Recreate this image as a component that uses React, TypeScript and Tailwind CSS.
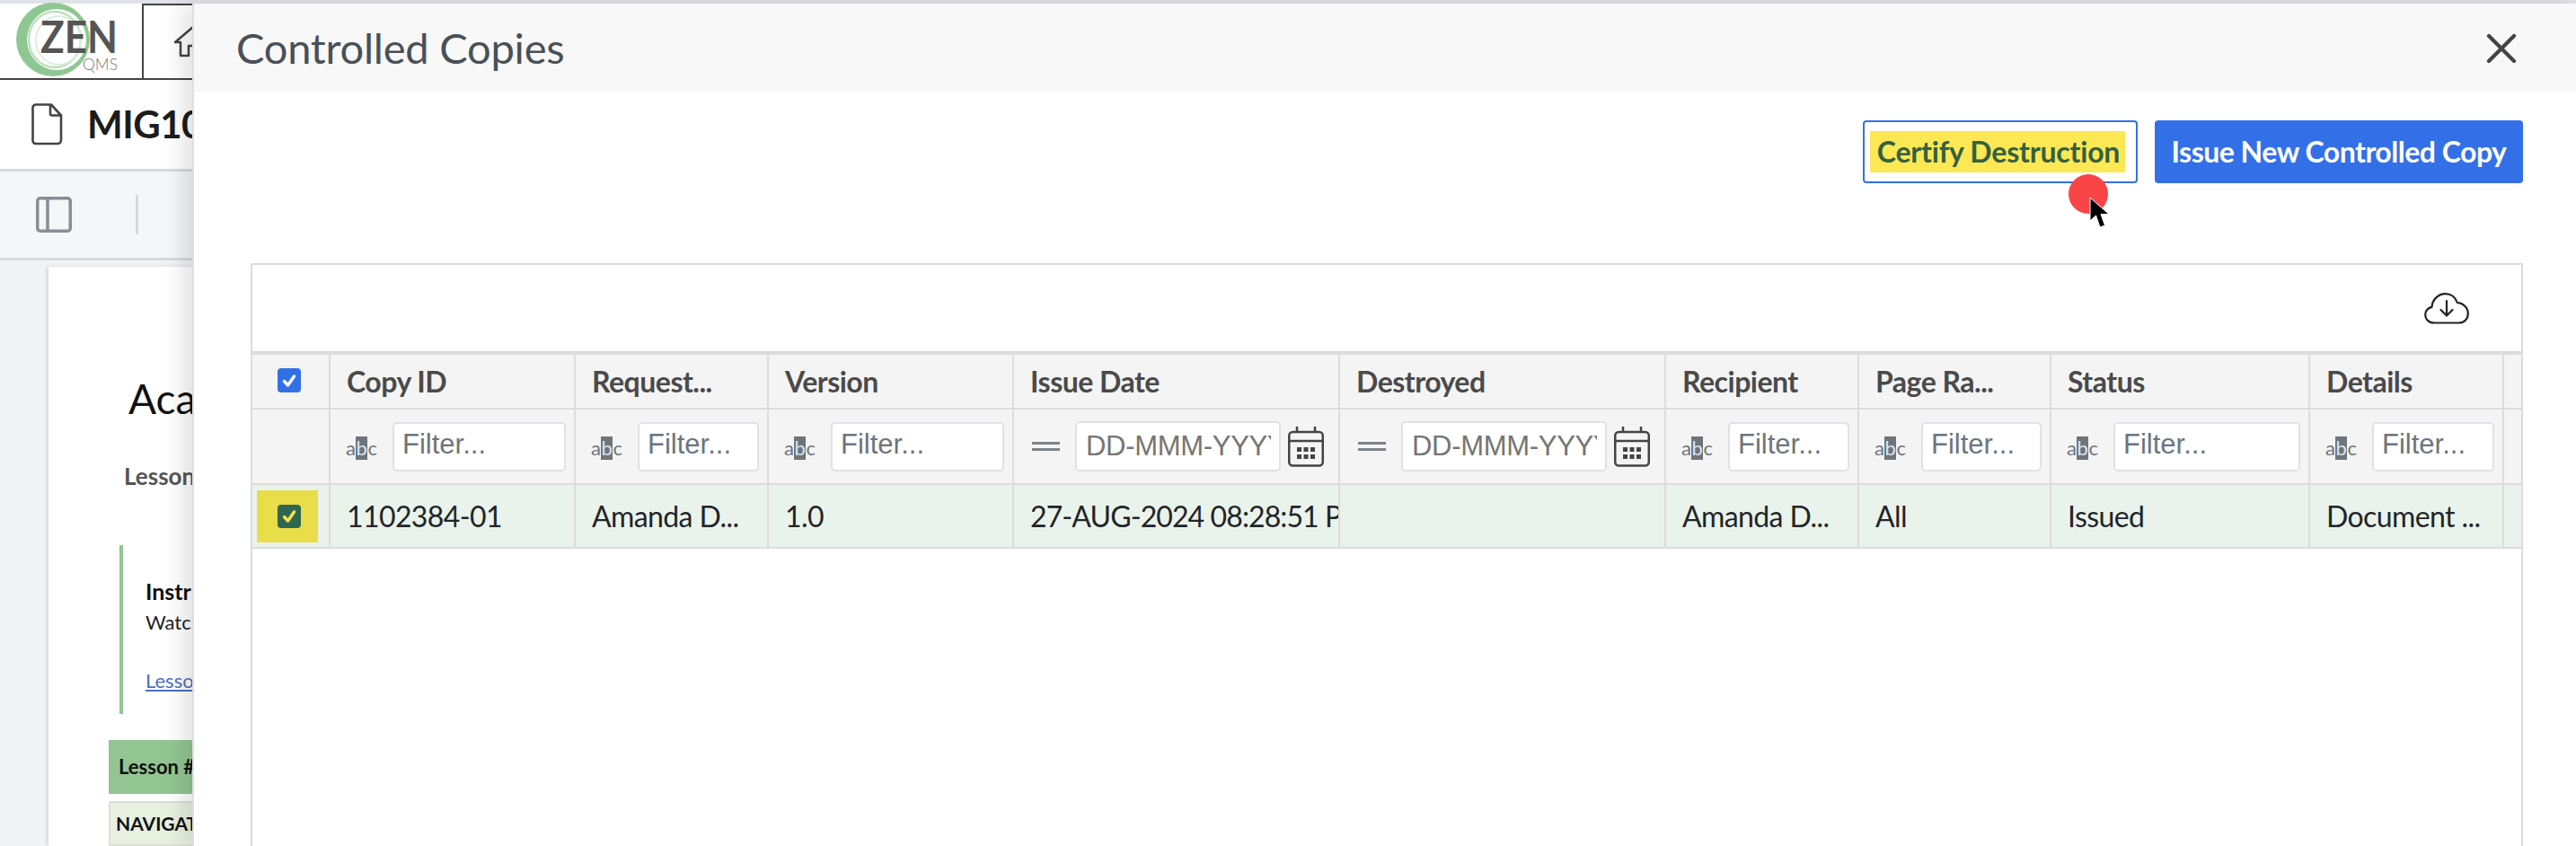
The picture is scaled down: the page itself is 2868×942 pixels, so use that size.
import { X } from 'lucide-react'

const gridCols =
  'grid grid-cols-[87px_273px_215px_273px_363px_363px_215px_214px_288px_216px_1fr]'

const columns = [
  { title: 'Copy ID', value: '1102384-01', filter: 'text' },
  { title: 'Request...', value: 'Amanda D...', filter: 'text' },
  { title: 'Version', value: '1.0', filter: 'text' },
  { title: 'Issue Date', value: '27-AUG-2024 08:28:51 PM', filter: 'date' },
  { title: 'Destroyed', value: '', filter: 'date' },
  { title: 'Recipient', value: 'Amanda D...', filter: 'text' },
  { title: 'Page Ra...', value: 'All', filter: 'text' },
  { title: 'Status', value: 'Issued', filter: 'text' },
  { title: 'Details', value: 'Document ...', filter: 'text' },
]

function Logo() {
  return (
    <svg width="130" height="84" viewBox="0 0 130 84" className="ml-[16px] shrink-0">
      <ellipse cx="43" cy="41" rx="41" ry="41" fill="#8fc792" />
      <ellipse cx="47" cy="41" rx="33" ry="34" fill="#ffffff" />
      <ellipse cx="45" cy="41" rx="29" ry="31" fill="none" stroke="#bfdfc0" strokeWidth="2.500" />
      <ellipse cx="49" cy="42" rx="25" ry="27" fill="none" stroke="#dceedd" strokeWidth="2" />
      <text x="29" y="56" fontFamily="Lato, sans-serif" fontWeight="700" fontSize="49" fill="#555" textLength="86" lengthAdjust="spacingAndGlyphs">
        ZEN
      </text>
      <text x="76" y="75" fontFamily="Lato, sans-serif" fontWeight="300" fontSize="18" fill="#777" textLength="39" lengthAdjust="spacingAndGlyphs">
        QMS
      </text>
    </svg>
  )
}

function HomeIcon() {
  return (
    <svg width="44" height="36" viewBox="0 0 44 36" fill="none" stroke="#444" strokeWidth="2.500" className="ml-[33px] shrink-0">
      <path d="M2 19 22 2l20 17h-6v15H27V23H17v11H8V19H2Z" strokeLinejoin="round" />
    </svg>
  )
}

function DocIcon() {
  return (
    <svg width="35" height="47" viewBox="0 0 35 47" fill="none" stroke="#444" strokeWidth="2.600" className="shrink-0">
      <path d="M5 1.500h17l11 12V41a4 4 0 0 1-4 4H5a3.500 3.500 0 0 1-3.500-4V5A3.500 3.500 0 0 1 5 1.500Z" strokeLinejoin="round" />
      <path d="M21 2v9.500a2 2 0 0 0 2 2h10" strokeLinejoin="round" />
    </svg>
  )
}

function PanelIcon() {
  return (
    <svg width="40" height="40" viewBox="0 0 40 40" fill="none" stroke="#868d96" strokeWidth="3.500" className="shrink-0">
      <rect x="1.750" y="1.750" width="36.500" height="36.500" rx="3" />
      <path d="M13 2v36" />
    </svg>
  )
}

function AbcIcon() {
  return (
    <span className="flex h-[26px] w-[35px] shrink-0 items-center font-[Lato,sans-serif] text-[22px] leading-none text-[#6c757d]">
      <span>a</span>
      <span className="flex h-[26px] w-[15px] items-center justify-center bg-[#6c757d] text-[#dbe4ee]">b</span>
      <span>c</span>
    </span>
  )
}

function CalendarIcon() {
  return (
    <svg width="40" height="46" viewBox="0 0 40 46" fill="none" className="shrink-0" stroke="#444" strokeWidth="2.500">
      <rect x="1.250" y="7" width="37.500" height="37.500" rx="4" />
      <path d="M1.500 17h37M10 1v7M30 1v7" />
      <g fill="#444" stroke="none">
        <rect x="10" y="24" width="5" height="5" />
        <rect x="17.500" y="24" width="5" height="5" />
        <rect x="25" y="24" width="5" height="5" />
        <rect x="10" y="32" width="5" height="5" />
        <rect x="17.500" y="32" width="5" height="5" />
        <rect x="25" y="32" width="5" height="5" />
      </g>
    </svg>
  )
}

function CloudDownload() {
  return (
    <svg width="50" height="35" viewBox="0 0 50 35" fill="none" stroke="#222" strokeWidth="2.200" strokeLinecap="round" strokeLinejoin="round">
      <path d="M11 33.500C5 33.500 1.200 29.500 1.200 24.500c0-4.500 3.300-8 7.300-8.700C9 7.500 16 1.200 23.500 1.200c6.500 0 11.500 4 13.300 9.800 6.500.3 12 5.500 12 12 0 6-4 10.500-10 10.500H11Z" />
      <path d="M25 9v16M18.500 19l6.500 6.500 6.500-6.500" />
    </svg>
  )
}

function Check({ color }: { color: string }) {
  return (
    <svg width="18" height="18" viewBox="0 0 18 18" fill="none" stroke={color} strokeWidth="3.400" strokeLinecap="round" strokeLinejoin="round">
      <path d="M3.500 9.500 7.500 14 14.500 4" />
    </svg>
  )
}

function FilterCell({ kind }: { kind: string }) {
  if (kind === 'date') {
    return (
      <div className="flex items-center border-r-2 border-[#dcdcdc] pl-[20px]">
        <div className="flex w-[31px] shrink-0 flex-col gap-[4px]">
          <span className="h-[3px] bg-[#7b838c]" />
          <span className="h-[3px] bg-[#7b838c]" />
        </div>
        <div className="ml-[17px] flex h-[56px] w-[229px] shrink-0 items-center overflow-hidden rounded-[5px] border-2 border-[#dee2e6] bg-white pl-[10px] pr-[9px]">
          <span className="overflow-hidden whitespace-nowrap font-['Liberation_Sans',sans-serif] text-[31px] tracking-[-0.3px] text-[#757575]">
            DD-MMM-YYYY
          </span>
        </div>
        <div className="ml-[8px]">
          <CalendarIcon />
        </div>
      </div>
    )
  }
  return (
    <div className="flex items-center border-r-2 border-[#dcdcdc] pl-[17px] pr-[9px]">
      <div className="mt-[4px]">
        <AbcIcon />
      </div>
      <div className="ml-[17px] flex h-[55px] min-w-0 flex-1 items-center rounded-[5px] border-2 border-[#dee2e6] bg-white pb-[3px] pl-[9px] font-['Liberation_Sans',sans-serif] text-[31px] text-[#6c757d]">
        Filter...
      </div>
    </div>
  )
}

function BackgroundPage() {
  return (
    <div className="flex h-[942px] w-full flex-col overflow-hidden font-[Lato,sans-serif]">
      <div className="h-[4px] bg-[#dfe2e7]" />
      <div className="flex h-[85px] bg-white">
        <div className="flex w-[158px] shrink-0 items-center border-b-2 border-[#444]">
          <Logo />
        </div>
        <div className="flex flex-1 items-center border-2 border-r-0 border-[#444]">
          <HomeIcon />
        </div>
      </div>
      <div className="flex h-[103px] items-center gap-[27px] border-b-[3px] border-[#d8dade] bg-white pl-[35px]">
        <DocIcon />
        <span className="text-[42px] font-bold tracking-[-0.5px] text-[#1c1c1c]">MIG1001</span>
      </div>
      <div className="flex h-[100px] items-center gap-[71px] border-b-[3px] border-[#d8dade] bg-[#f5f6f8] pl-[40px]">
        <PanelIcon />
        <span className="h-[44px] w-[3px] bg-[#d5d8dc]" />
      </div>
      <div className="flex-1 bg-[#f2f3f5] pl-[54px] pt-[7px]">
        <div className="h-full w-[2000px] bg-white pl-[67px] shadow-[-2px_0_4px_rgba(0,0,0,0.12)]">
          <div className="pl-[22px] pt-[119px] text-[46px] leading-[56px] text-[#111]">Academy</div>
          <div className="pl-[17px] pt-[42px] text-[26px] font-bold leading-[32px] text-[#555]">Lesson</div>
          <div className="ml-[12px] mt-[61px] h-[188px] border-l-[4px] border-[#93c593] pl-[25px] pt-[35px]">
            <div className="text-[25px] font-bold leading-[32px] text-[#111]">Instructions</div>
            <div className="pt-[4px] text-[22px] leading-[30px] text-[#222]">Watch</div>
            <div className="pt-[35px] text-[22px] leading-[30px] text-[#4a6fc4] underline">Lesson</div>
          </div>
          <div className="mt-[29px] flex h-[60px] items-center bg-[#93c593] pl-[11px] text-[22px] font-bold text-[#111]">
            Lesson #
          </div>
          <div className="mt-[8px] flex h-[50px] items-center border-2 border-[#dcdfd8] bg-[#e8f0e0] pl-[6px] text-[21px] font-bold text-[#111]">
            NAVIGATION
          </div>
        </div>
      </div>
    </div>
  )
}

export default function App() {
  return (
    <div className="relative h-[942px] w-[2868px] overflow-hidden bg-white">
      <BackgroundPage />

      {/* slide-over panel */}
      <div className="absolute bottom-0 left-[214px] right-0 top-[4px] flex flex-col border-l-2 border-[#dcdfe3] bg-white font-[Lato,sans-serif] shadow-[-10px_0_24px_rgba(0,0,0,0.12)]">
        <div className="flex h-[99px] shrink-0 items-center justify-between bg-[#f8f8f8] pl-[47px] pr-[55px]">
          <h2 className="text-[47px] font-normal leading-none tracking-[-0.2px] text-[#495057]">Controlled Copies</h2>
          <X className="h-[56px] w-[56px] text-[#444]" strokeWidth={1.8} />
        </div>

        <div className="flex min-h-0 flex-1 flex-col pl-[63px] pr-[59px] pt-[31px]">
          <div className="flex shrink-0 justify-end gap-[19px]">
            <button
              type="button"
              className="flex h-[70px] w-[306px] items-center rounded-[4px] border-2 border-[#3370e8] bg-white pl-[6px]"
            >
              <span className="flex h-[46px] w-[284px] items-center justify-center whitespace-nowrap bg-[#fce855] pl-[2px] text-[32px] font-bold tracking-[-0.2px] text-[#356040]">
                Certify Destruction
              </span>
            </button>
            <button
              type="button"
              className="flex h-[70px] w-[410px] items-center justify-center whitespace-nowrap rounded-[4px] bg-[#3370e8] text-[32px] font-bold tracking-[-0.5px] text-white"
            >
              Issue New Controlled Copy
            </button>
          </div>

          <div className="mt-[89px] flex min-h-0 flex-1 flex-col border-2 border-b-0 border-[#dcdcdc]">
            <div className="flex h-[100px] shrink-0 items-center justify-end border-b-[4px] border-[#dcdcdc] pr-[58px]">
              <CloudDownload />
            </div>

            <div className={`${gridCols} h-[61px] shrink-0 border-b-2 border-[#dcdcdc] bg-[#f4f4f4]`}>
              <div className="flex items-center justify-center border-r-2 border-[#dcdcdc] pb-[2px] pr-[3px]">
                <span className="flex h-[27px] w-[26px] items-center justify-center rounded-[4px] bg-[#3370e8]">
                  <Check color="#ffffff" />
                </span>
              </div>
              {columns.map((col) => (
                <div
                  key={col.title}
                  className="flex items-center overflow-hidden whitespace-nowrap border-r-2 border-[#dcdcdc] pl-[18px] text-[32px] font-bold tracking-[-0.5px] text-[#4a4a4a]"
                >
                  {col.title}
                </div>
              ))}
              <div />
            </div>

            <div className={`${gridCols} h-[84px] shrink-0 border-b-2 border-[#dcdcdc] bg-[#f4f4f4]`}>
              <div className="border-r-2 border-[#dcdcdc]" />
              {columns.map((col) => (
                <FilterCell key={col.title} kind={col.filter} />
              ))}
              <div />
            </div>

            <div className={`${gridCols} h-[71px] shrink-0 border-b-2 border-[#dcdcdc] bg-[#eaf3eb]`}>
              <div className="flex items-center border-r-2 border-[#dcdcdc] pl-[5px]">
                <span className="flex h-[58px] w-[68px] items-center justify-center bg-[#e9dd4a] pl-[3px]">
                  <span className="flex h-[26px] w-[26px] items-center justify-center rounded-[4px] bg-[#2f6650]">
                    <Check color="#f5e24a" />
                  </span>
                </span>
              </div>
              {columns.map((col) => (
                <div
                  key={col.title}
                  className={
                    col.filter === 'date'
                      ? 'flex items-center overflow-hidden whitespace-nowrap border-r-2 border-[#dcdcdc] pl-[18px] text-[32px] tracking-[-0.9px] text-[#212529]'
                      : 'flex items-center overflow-hidden whitespace-nowrap border-r-2 border-[#dcdcdc] pl-[18px] text-[32px] tracking-[-0.6px] text-[#212529]'
                  }
                >
                  {col.value}
                </div>
              ))}
              <div />
            </div>
          </div>
        </div>
      </div>

      {/* recorded click marker and mouse pointer */}
      <div className="absolute left-[2303px] top-[194px] h-[44px] w-[44px] rounded-full bg-[#f94545]" />
      <svg width="24" height="36" viewBox="0 0 24 36" className="absolute left-[2326px] top-[219px]">
        <path d="M1 1v26l6.500-6 4.500 13 5.500-2-4.500-12.500H22L1 1Z" fill="#000" stroke="#fff" strokeWidth="1" />
      </svg>
    </div>
  )
}
